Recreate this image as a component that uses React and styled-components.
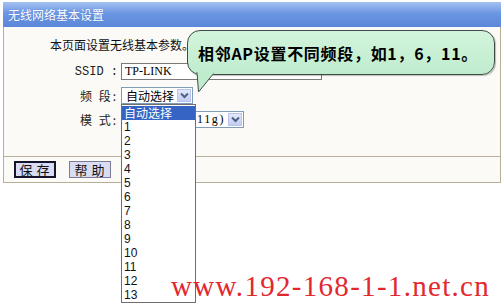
import React from 'react';
import styled, { createGlobalStyle } from 'styled-components';

const GlobalStyle = createGlobalStyle`
  html, body {
    margin: 0;
    background: #fff;
    font-family: "Noto Sans CJK SC", "Liberation Sans", sans-serif;
  }
`;

const Page = styled.div`
  position: relative;
  width: 504px;
  height: 307px;
  overflow: hidden;
  padding-top: 2px;
  box-sizing: border-box;
`;

const Panel = styled.div`
  margin-left: 3px;
  width: 498px;
  border-left: 1px solid #b9ae98;
  border-right: 1px solid #b9ae98;
  border-bottom: 1px solid #b9ae98;
  box-sizing: border-box;
`;

const TitleBar = styled.div`
  height: 25px;
  margin-left: -1px;
  margin-right: -1px;
  background: linear-gradient(#a6c2f2, #6b96e2 45%, #5b87da);
  color: #fff;
  font-size: 12px;
  line-height: 25px;
  padding-left: 5px;
  text-shadow: 0 0 1px #4a70c0;
`;

const Body = styled.div`
  background: #fbfaf6;
  padding: 11px 0 28px;
  border-bottom: 1px solid #b9ae98;
`;

const Intro = styled.div`
  padding-left: 46px;
  font-size: 12px;
  line-height: 14px;
  color: #111;
`;

const Form = styled.div`
  display: grid;
  grid-template-columns: 114px auto;
  column-gap: 3px;
  row-gap: 7px;
  margin-top: 11px;
  align-items: center;
`;

const Label = styled.div`
  text-align: right;
  font-size: 12px;
  color: #222;
  white-space: nowrap;
  font-family: ${p => (p.$latin ? '"Liberation Mono", monospace' : '"Noto Sans CJK SC", sans-serif')};
  letter-spacing: ${p => (p.$latin ? '0' : '2px')};
`;

const Input = styled.div`
  width: 201px;
  height: 17px;
  box-sizing: border-box;
  border: 1px solid #7a7a7a;
  background: #fff;
  font-family: "Liberation Serif", serif;
  font-size: 12px;
  line-height: 15px;
  padding-left: 3px;
`;

const Select = styled.div`
  width: ${p => p.$w}px;
  height: 17px;
  box-sizing: border-box;
  border: 1px solid #7f9db9;
  background: #fff;
  display: flex;
  align-items: center;
  font-size: 12px;
  padding-left: 4px;
  padding-right: 1px;
  overflow: hidden;
  white-space: nowrap;
`;

const SelectText = styled.div`
  flex: 1;
  min-width: 0;
  display: flex;
  justify-content: ${p => (p.$latin ? 'flex-end' : 'flex-start')};
  overflow: hidden;
  padding-right: 3px;
  font-family: ${p => (p.$latin ? '"Liberation Serif", serif' : '"Noto Sans CJK SC", sans-serif')};
  letter-spacing: ${p => (p.$latin ? '1.6px' : '0')};
  span {
    flex: none;
  }
`;

const ArrowBtn = styled.span`
  width: 14px;
  height: 13px;
  flex: none;
  background: linear-gradient(#e4e8fa, #c2cdf2);
  border: 1px solid #b6c4ee;
  box-sizing: border-box;
  display: flex;
  align-items: center;
  justify-content: center;
`;

const Footer = styled.div`
  background: #fbfaf6;
  height: 25px;
  display: flex;
  align-items: center;
  gap: 13px;
  padding-left: 10px;
`;

const Button = styled.div`
  width: 42px;
  height: 17px;
  box-sizing: border-box;
  background: #d9dcf2;
  border: ${p => (p.$primary ? '2px solid #15152e' : '1px solid #7b7b93')};
  font-size: 13px;
  line-height: ${p => (p.$primary ? '13px' : '15px')};
  text-align: center;
  white-space: nowrap;
  letter-spacing: 4px;
  padding-left: 3px;
  color: #111;
`;

const Balloon = styled.div`
  position: absolute;
  left: 187px;
  top: 30px;
  width: 308px;
  height: 45px;
  box-sizing: border-box;
  border: 1px solid #3e4a44;
  border-radius: 13px;
  background: linear-gradient(#d2f4dc, #c0ecce);
  box-shadow: 1px 1px 1px rgba(0, 0, 0, 0.25);
  display: flex;
  align-items: center;
  padding-left: 10px;
  font-size: 16px;
  font-weight: bold;
  color: #000;
  letter-spacing: 0.7px;
`;

const Tail = styled.svg`
  position: absolute;
  left: 195px;
  top: 72px;
`;

const DropList = styled.div`
  position: absolute;
  left: 121px;
  top: 104px;
  width: 75px;
  height: 199px;
  box-sizing: border-box;
  border: 1px solid #6f6f6f;
  background: #fff;
  padding-top: 1px;
`;

const Option = styled.div`
  height: 14px;
  line-height: 14px;
  font-size: 12px;
  padding-left: 2px;
  font-family: ${p => (p.$selected ? '"Noto Sans CJK SC", sans-serif' : '"Liberation Sans", sans-serif')};
  background: ${p => (p.$selected ? '#3465c4' : 'transparent')};
  color: ${p => (p.$selected ? '#fff' : '#111')};
`;

const Watermark = styled.div`
  position: absolute;
  left: 171px;
  top: 270px;
  font-family: "Liberation Serif", serif;
  font-size: 29px;
  line-height: 32px;
  letter-spacing: 1.3px;
  color: #e2282e;
  white-space: nowrap;
`;

function Chevron() {
  return (
    <svg width="9" height="7" viewBox="0 0 9 7">
      <path d="M1 1.5 L4.5 5 L8 1.5" fill="none" stroke="#4d6185" strokeWidth="2" />
    </svg>
  );
}

const channels = ['1', '2', '3', '4', '5', '6', '7', '8', '9', '10', '11', '12', '13'];

export default function App() {
  return (
    <Page>
      <GlobalStyle />
      <Panel>
        <TitleBar>无线网络基本设置</TitleBar>
        <Body>
          <Intro>本页面设置无线基本参数。</Intro>
          <Form>
            <Label $latin>SSID :</Label>
            <Input>TP-LINK</Input>
            <Label>频 段:</Label>
            <Select $w={72}>
              <SelectText><span>自动选择</span></SelectText>
              <ArrowBtn><Chevron /></ArrowBtn>
            </Select>
            <Label>模 式:</Label>
            <Select $w={123}>
              <SelectText $latin><span>54Mbps (802.11g)</span></SelectText>
              <ArrowBtn><Chevron /></ArrowBtn>
            </Select>
          </Form>
        </Body>
        <Footer>
          <Button $primary>保存</Button>
          <Button>帮助</Button>
        </Footer>
      </Panel>

      <Balloon>相邻AP设置不同频段，如1，6，11。</Balloon>
      <Tail width="24" height="22" viewBox="0 0 24 22">
        <path d="M2 0 L3.5 20 L19 1" fill="#c0ecce" stroke="#3e4a44" strokeWidth="1" />
        <rect x="2.6" y="0" width="16" height="2.2" fill="#c0ecce" />
      </Tail>

      <DropList>
        <Option $selected>自动选择</Option>
        {channels.map(c => (
          <Option key={c}>{c}</Option>
        ))}
      </DropList>

      <Watermark>www.192-168-1-1.net.cn</Watermark>
    </Page>
  );
}
